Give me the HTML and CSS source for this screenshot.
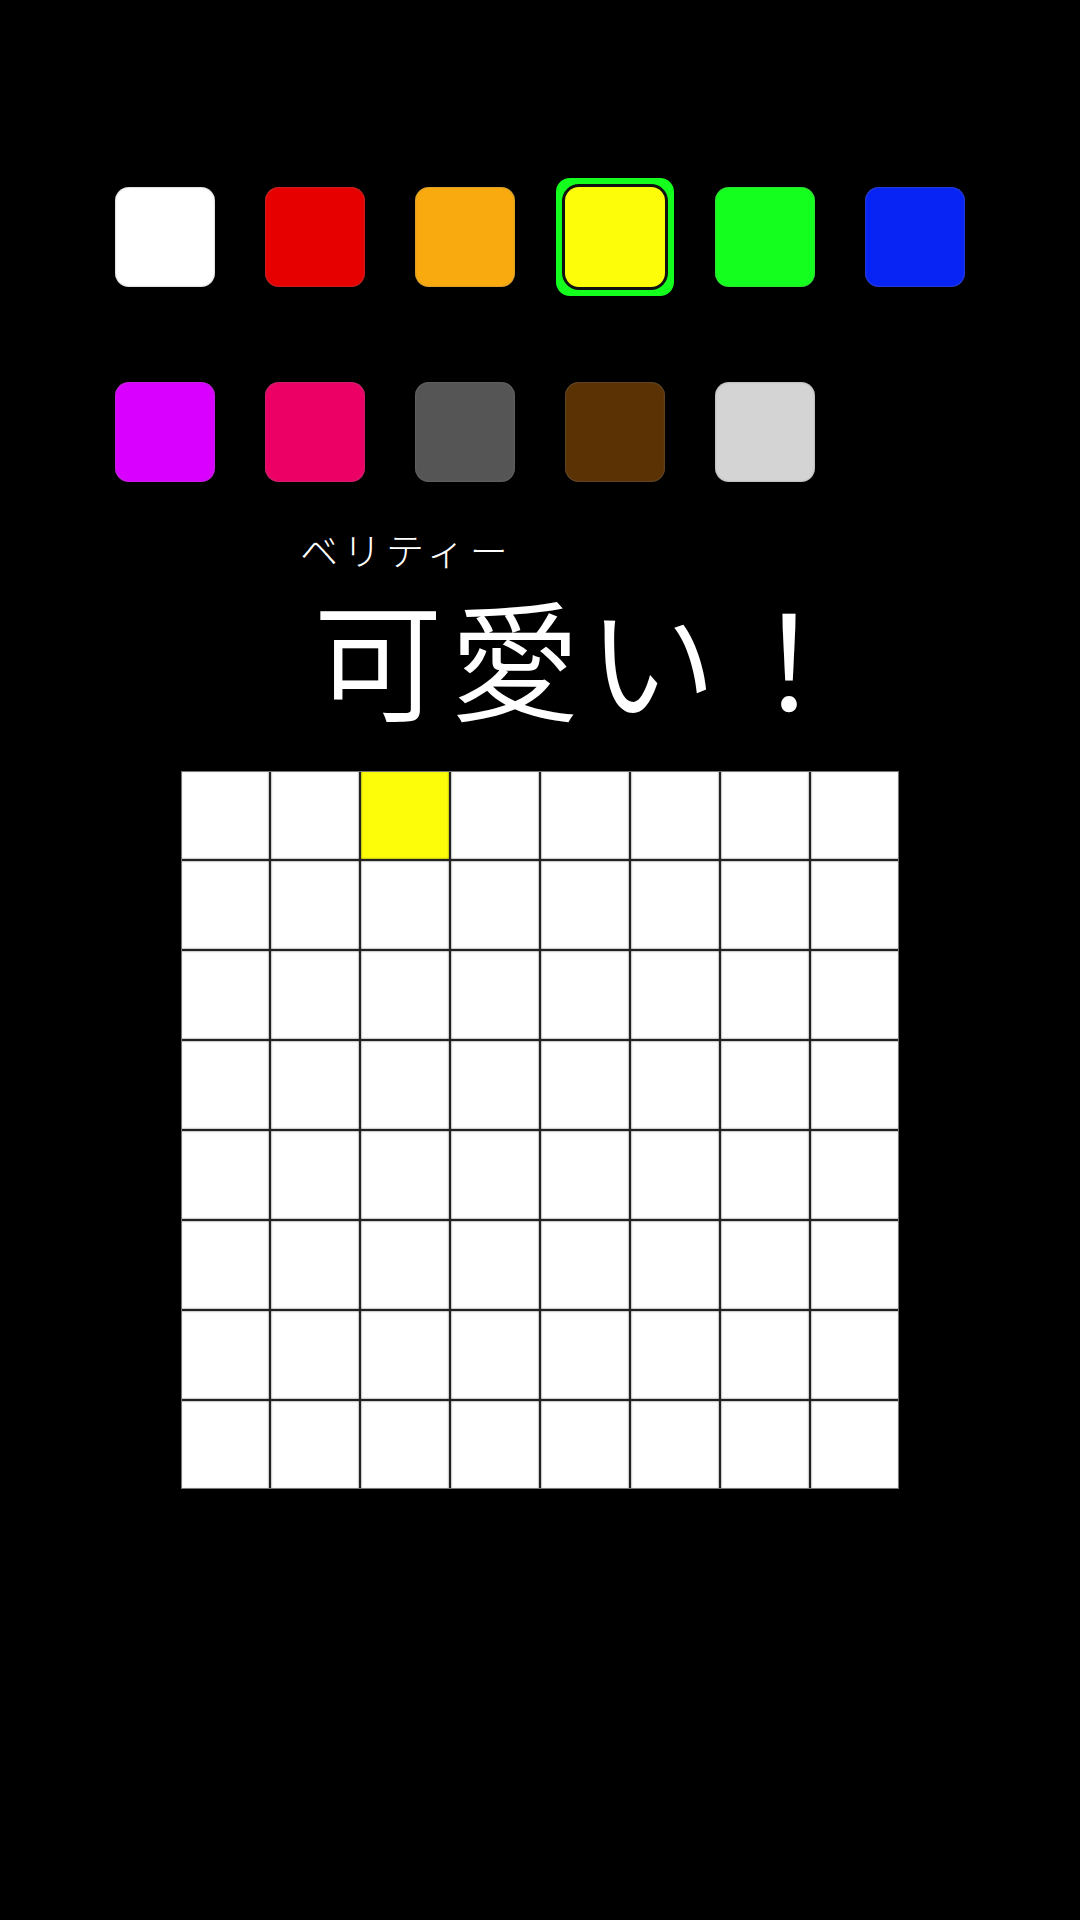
FILE: index.html
```html
<!DOCTYPE html>
<html lang="ja">
<head>
    <meta charset="UTF-8">
    <meta name="viewport" content="width=device-width, initial-scale=1.0">
    <title>可愛い！</title>
    <link rel="stylesheet" href="styles.css">
</head>
<body>
    <!-- Colour palette -->
    <div class="palette">
        <div class="swatch white"></div>
        <div class="swatch red"></div>
        <div class="swatch orange"></div>
        <div class="swatch yellow selected"></div>
        <div class="swatch green"></div>
        <div class="swatch blue"></div>
        <div class="swatch purple"></div>
        <div class="swatch pink"></div>
        <div class="swatch gray"></div>
        <div class="swatch brown"></div>
        <div class="swatch silver"></div>
    </div>

    <!-- Word -->
    <div class="word">
        <div class="reading">ベリティー</div>
        <div class="title">可愛い！</div>
    </div>

    <!-- Drawing board -->
    <div class="board">
        <div class="cell"></div><div class="cell"></div><div class="cell yellow"></div><div class="cell"></div><div class="cell"></div><div class="cell"></div><div class="cell"></div><div class="cell"></div>
        <div class="cell"></div><div class="cell"></div><div class="cell"></div><div class="cell"></div><div class="cell"></div><div class="cell"></div><div class="cell"></div><div class="cell"></div>
        <div class="cell"></div><div class="cell"></div><div class="cell"></div><div class="cell"></div><div class="cell"></div><div class="cell"></div><div class="cell"></div><div class="cell"></div>
        <div class="cell"></div><div class="cell"></div><div class="cell"></div><div class="cell"></div><div class="cell"></div><div class="cell"></div><div class="cell"></div><div class="cell"></div>
        <div class="cell"></div><div class="cell"></div><div class="cell"></div><div class="cell"></div><div class="cell"></div><div class="cell"></div><div class="cell"></div><div class="cell"></div>
        <div class="cell"></div><div class="cell"></div><div class="cell"></div><div class="cell"></div><div class="cell"></div><div class="cell"></div><div class="cell"></div><div class="cell"></div>
        <div class="cell"></div><div class="cell"></div><div class="cell"></div><div class="cell"></div><div class="cell"></div><div class="cell"></div><div class="cell"></div><div class="cell"></div>
        <div class="cell"></div><div class="cell"></div><div class="cell"></div><div class="cell"></div><div class="cell"></div><div class="cell"></div><div class="cell"></div><div class="cell"></div>
    </div>
</body>
</html>
```

FILE: styles.css
```css
body {
    margin: 0;
    width: 1080px;
    height: 1920px;
    overflow: hidden;
    background: #000;
    font-family: "Noto Sans CJK JP", "Noto Sans", sans-serif;
    color: #fff;
}
.palette {
    display: grid;
    grid-template-columns: repeat(6, 100px);
    grid-auto-rows: 100px;
    column-gap: 50px;
    row-gap: 95px;
    padding: 187px 0 0 115px;
}
.swatch {
    position: relative;
    border-radius: 14px;
    box-shadow: inset 0 0 2px rgba(128, 128, 128, 0.8);
}
/* green ring keeps tight corners, so it can't be a plain box-shadow spread */
.swatch.selected {
    box-shadow: 0 0 0 3px #111;
}
.swatch.selected::before {
    content: "";
    position: absolute;
    inset: -9px;
    z-index: -1;
    border-radius: 14px;
    background: #14ff1e;
}
.white { background: #fff; }
.red { background: #e60000; }
.orange { background: #f9aa0f; }
.yellow { background: #fdfd0a; }
.green { background: #14ff1e; }
.blue { background: #0824f5; }
.purple { background: #d900ff; }
.pink { background: #ec0066; }
.gray { background: #555; }
.brown { background: #5a3204; }
.silver { background: #d4d4d4; }
.word {
    height: 289px;
    padding-left: 300px;
    overflow: hidden;
}
.reading {
    margin-top: 40px;
    font-size: 38px;
    font-weight: 300;
    line-height: 54px;
    letter-spacing: 5px;
}
.title {
    margin-top: 3px;
    margin-left: 13px;
    font-size: 130px;
    font-weight: 350;
    line-height: 150px;
    letter-spacing: 7px;
    white-space: nowrap;
}
.board {
    display: grid;
    grid-template-columns: repeat(8, 88px);
    grid-auto-rows: 88px;
    gap: 2px;
    width: 718px;
    margin-left: 181px;
    background: #222;
    outline: 1px solid #777;
    outline-offset: -1px;
}
.cell {
    background: #fff;
    box-shadow: inset 0 0 2px rgba(0, 0, 0, 0.7);
}
.cell.yellow {
    background: #fdfd0a;
}
```
